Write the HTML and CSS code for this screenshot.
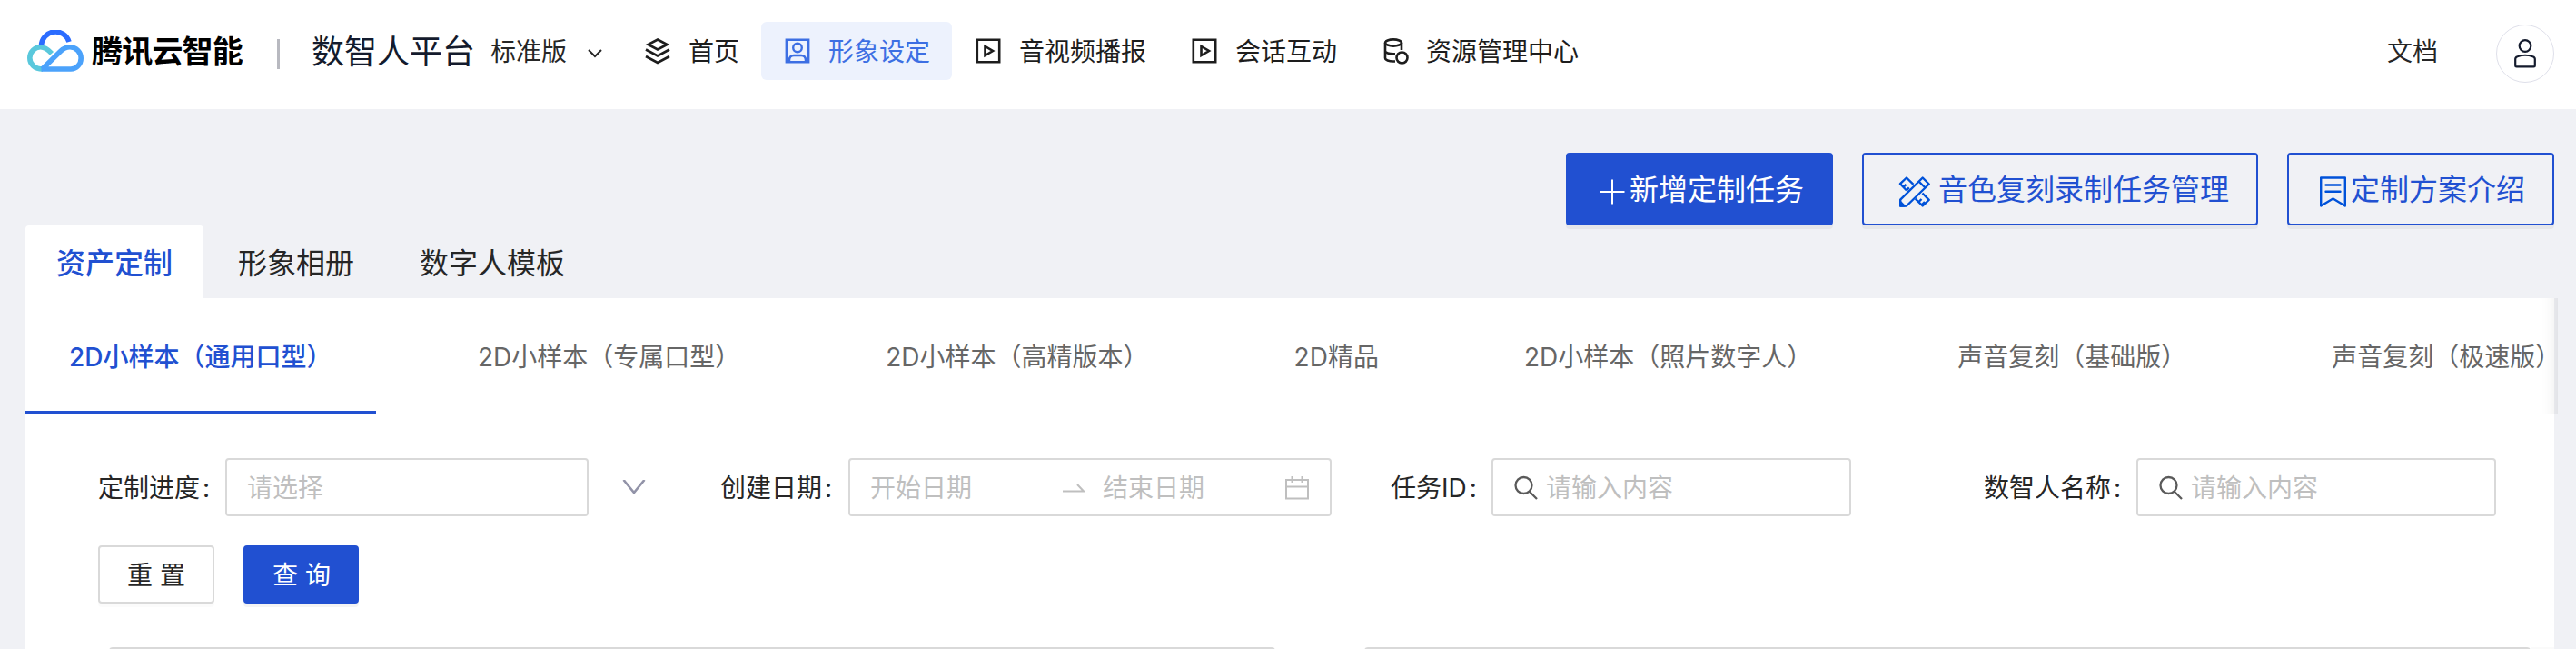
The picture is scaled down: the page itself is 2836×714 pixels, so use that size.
FILE: index.html
```html
<!DOCTYPE html>
<html lang="zh-CN">
<head>
    <meta charset="UTF-8">
    <meta name="viewport" content="width=device-width, initial-scale=1.0">
    <title>数智人平台 - 形象设定</title>
    <link rel="stylesheet" href="styles.css">
</head>
<body>
    <header>
        <a class="brand">
            <svg class="brand-cloud" viewBox="0 0 62 46" fill="none" stroke-width="5.6">
                <path d="M15.5 17A15.6 15.6 0 0 1 46 13" stroke="#2b6cff"/>
                <path d="M17 43C8 43 2.8 37.5 2.8 30.8C2.8 24 8.3 18.8 14.5 18.8C19.5 18.8 22.5 21 27 25.8" stroke="#5ac8dc"/>
                <path d="M15.5 43H48C54.5 43 59.2 37.5 59.2 31C59.2 24.5 54 18.8 47 18.8C42.5 18.8 39.5 20.5 36.5 23.5L16.5 43" stroke="#4ba2fb"/>
            </svg>
            <span class="brand-name">腾讯云智能</span>
        </a>
        <span class="divider"></span>
        <span class="platform">数智人平台</span>
        <span class="edition">标准版</span>
        <svg class="edition-arrow" viewBox="0 0 16 10" fill="none" stroke="#262626" stroke-width="2"><path d="M1 1l7 7 7-7"/></svg>

        <nav>
            <a class="nav-item">
                <svg viewBox="0 0 32 32" fill="none" stroke="currentColor" stroke-width="2.6">
                    <path d="M16 3.5L26.5 9 16 14.5 5.5 9zM3 14.5l13 7 13-7M3 22l13 7 13-7"/>
                </svg>
                <span>首页</span>
            </a>
            <a class="nav-item active">
                <svg viewBox="0 0 32 32" fill="none" stroke="currentColor" stroke-width="2.4">
                    <path d="M3.8 3.8h24.4v24.4H3.8zM7 28v-1.5c0-3.5 2-5.5 5-5.5h8c3 0 5 2 5 5.5V28"/>
                    <circle cx="16" cy="12.5" r="4.8"/>
                </svg>
                <span>形象设定</span>
            </a>
            <a class="nav-item">
                <svg viewBox="0 0 32 32" fill="none" stroke="currentColor" stroke-width="2.6">
                    <path d="M3.8 3.8h24.4v24.4H3.8zM12.5 11v10l8.5-5z"/>
                </svg>
                <span>音视频播报</span>
            </a>
            <a class="nav-item">
                <svg viewBox="0 0 32 32" fill="none" stroke="currentColor" stroke-width="2.6">
                    <path d="M3.8 3.8h24.4v24.4H3.8zM12.5 11v10l8.5-5z"/>
                </svg>
                <span>会话互动</span>
            </a>
            <a class="nav-item">
                <svg viewBox="0 0 32 32" fill="none" stroke="currentColor" stroke-width="2.6">
                    <ellipse cx="14" cy="7" rx="9" ry="3.6"/>
                    <path d="M5 7v17c0 2 4 3.5 9 3.5h2M23 7v8M5 16c0 2 4 3.5 11 3.2"/>
                    <circle cx="23.5" cy="23.5" r="6"/>
                </svg>
                <span>资源管理中心</span>
            </a>
        </nav>

        <a class="docs">文档</a>
        <span class="avatar">
            <svg viewBox="0 0 24 32" fill="none" stroke="#141b2d" stroke-width="2.2">
                <circle cx="12" cy="7.5" r="6.3"/>
                <path d="M1.2 22c0-1.5.8-2.2 2.3-2.7 5-1.8 12-1.8 17 0 1.5.5 2.3 1.2 2.3 2.7v7c0 .9-.5 1.4-1.4 1.4H2.6c-.9 0-1.4-.5-1.4-1.4z"/>
            </svg>
        </span>
    </header>

    <main>
        <div class="actions">
            <button class="btn btn-lg btn-primary">
                <svg class="icon-plus" viewBox="0 0 38 34" fill="none" stroke="currentColor" stroke-width="2"><path d="M5.5 17h27M19 3.5v27"/></svg><span>新增定制任务</span>
            </button>
            <button class="btn btn-lg btn-ghost">
                <svg class="icon-tools" viewBox="0 0 52 34" fill="none" stroke="#0052d9" stroke-width="2.4" stroke-linejoin="round">
                    <path d="M17 15.5L10 8.2l7-6.7 7.5 7.3M13.5 11.8l3-3M17 15.2l2.8-2.8M34.5 18.5l7.2 7.3-7 6.7-8-7.8M30.5 28l3-3M34 31l3-3"/>
                    <path d="M34.7 1.5l7 7L17 32.5h-6.8v-6.8zM30.5 5.5l7 7"/>
                    <path d="M10.2 28v4.5h4.5z" fill="#0052d9"/>
                </svg><span>音色复刻录制任务管理</span>
            </button>
            <button class="btn btn-lg btn-ghost">
                <svg class="icon-book" viewBox="0 0 38 34" fill="none" stroke="#0052d9" stroke-width="2.4" stroke-linejoin="round" stroke-linecap="round">
                    <path d="M5.2 1.5h26.6v31L18.5 24.5 5.2 32.5zM10.5 9.5h16M10.5 16.8h16"/>
                </svg><span>定制方案介绍</span>
            </button>
        </div>

        <div class="tabs">
            <a class="tab active">资产定制</a>
            <a class="tab">形象相册</a>
            <a class="tab">数字人模板</a>
        </div>

        <section class="panel">
            <div class="subtabs">
                <a class="subtab active">2D小样本（通用口型）</a>
                <a class="subtab">2D小样本（专属口型）</a>
                <a class="subtab">2D小样本（高精版本）</a>
                <a class="subtab">2D精品</a>
                <a class="subtab">2D小样本（照片数字人）</a>
                <a class="subtab">声音复刻（基础版）</a>
                <a class="subtab">声音复刻（极速版）</a>
            </div>

            <div class="filters">
                <div class="field">
                    <label>定制进度<i>:</i></label>
                    <div class="input select">请选择</div>
                    <svg class="select-arrow" viewBox="0 0 26 16" fill="none" stroke="#9293a8" stroke-width="2.6"><path d="M1.5 0L13 14 24.5 0"/></svg>
                </div>
                <div class="field field-date">
                    <label>创建日期<i>:</i></label>
                    <div class="input range">
                        <span class="range-start">开始日期</span>
                        <svg class="range-arrow" viewBox="0 0 24 10" fill="none" stroke="currentColor" stroke-width="2"><path d="M0 8.5h23L16 1"/></svg>
                        <span class="range-end">结束日期</span>
                        <svg class="range-calendar" viewBox="0 0 28 28" fill="none" stroke="currentColor" stroke-width="2"><path d="M2 5h24v20.5H2zM2 12.5h24M8.5 1v7M19.5 1v7"/></svg>
                    </div>
                </div>
                <div class="field field-id">
                    <label>任务ID<i>:</i></label>
                    <div class="input search">
                        <svg viewBox="0 0 28 28" fill="none" stroke="#5a5a5a" stroke-width="2.3"><circle cx="11.5" cy="11" r="9"/><path d="M17.5 17.5l8.5 8.5"/></svg>请输入内容
                    </div>
                </div>
                <div class="field field-name">
                    <label>数智人名称<i>:</i></label>
                    <div class="input search">
                        <svg viewBox="0 0 28 28" fill="none" stroke="#5a5a5a" stroke-width="2.3"><circle cx="11.5" cy="11" r="9"/><path d="M17.5 17.5l8.5 8.5"/></svg>请输入内容
                    </div>
                </div>
            </div>

            <div class="filter-buttons">
                <button class="btn btn-default">重置</button>
                <button class="btn btn-primary">查询</button>
            </div>

            <div class="cards">
                <div class="card"></div>
                <div class="card"></div>
                <div class="scroll-track"></div>
            </div>
        </section>
    </main>
</body>
</html>
```

FILE: styles.css
```css
* {
    box-sizing: border-box;
}
body {
    margin: 0;
    height: 714px;
    overflow: hidden;
    background: #f0f1f5;
    color: #262626;
    font-family: Inter, "Noto Sans CJK SC", sans-serif;
    font-size: 28px;
    line-height: 40px;
}
svg {
    display: block;
    flex: none;
}

/* header */
header {
    display: flex;
    align-items: center;
    height: 120px;
    padding: 0 24px 8px 30px;
    background: #fff;
    white-space: nowrap;
}
.brand {
    display: flex;
    align-items: center;
    width: 275px;
}
.brand-cloud {
    width: 62px;
    height: 46px;
    margin-right: 9px;
}
.brand-name {
    padding-top: 2px;
    color: #000;
    font-size: 34px;
    font-weight: 700;
    letter-spacing: -0.8px;
}
.divider {
    width: 3px;
    height: 33px;
    margin: 6px 35px 0 0;
    background: #b8b9c0;
}
.platform {
    width: 197px;
    padding-top: 2px;
    color: #141b2d;
    font-size: 36px;
}
.edition {
    width: 107px;
    padding-top: 1px;
}
.edition-arrow {
    width: 16px;
    height: 10px;
    margin: 6px 21px 0 0;
}
nav {
    display: flex;
}
.nav-item {
    display: flex;
    align-items: center;
    gap: 18px;
    height: 64px;
    padding: 0 24px;
    border-radius: 6px;
    color: #1d1d1d;
}
.nav-item svg {
    width: 32px;
    height: 32px;
}
.nav-item span {
    padding-top: 2px;
}
.nav-item.active {
    background: #edf2fd;
    color: #3d6fe3;
}
.docs {
    margin: 0 64px 0 auto;
    padding-top: 2px;
}
.avatar {
    display: flex;
    align-items: center;
    justify-content: center;
    width: 64px;
    height: 64px;
    margin-top: 6px;
    border: 1px solid #dfe0ea;
    border-radius: 50%;
}
.avatar svg {
    width: 24px;
    height: 32px;
}

/* buttons */
.btn {
    display: flex;
    align-items: center;
    height: 64px;
    padding: 2px 30px 0;
    border: 2px solid #2150d1;
    border-radius: 4px;
    font: inherit;
    white-space: nowrap;
}
.btn-lg {
    height: 80px;
    font-size: 32px;
}
.btn-primary {
    background: #2150d1;
    color: #fff;
    box-shadow: 0 4px 0 rgba(0, 0, 0, 0.045);
}
.btn-ghost {
    background: #f0f1f5;
    color: #2150d1;
    box-shadow: 0 4px 0 rgba(0, 0, 0, 0.045);
}
.btn-default {
    border-color: #d9d9d9;
    background: #fff;
    color: #262626;
    box-shadow: 0 4px 0 rgba(0, 0, 0, 0.016);
}
.icon-plus,
.icon-book {
    width: 38px;
    height: 34px;
    margin-top: 4px;
}
.icon-tools {
    width: 52px;
    height: 34px;
    margin-top: 4px;
}

main {
    padding: 48px 24px 0 28px;
}
.actions {
    display: flex;
    justify-content: flex-end;
    gap: 32px;
}

/* top tabs */
.tabs {
    display: flex;
    gap: 4px;
    height: 80px;
}
.tab {
    height: 80px;
    padding: 0 34px;
    border-radius: 4px 4px 0 0;
    font-size: 32px;
    line-height: 83px;
}
.tab.active {
    background: #fff;
    color: #2150d1;
    font-weight: 500;
}

.panel {
    height: 386px;
    background: #fff;
}
.subtabs {
    position: relative;
    display: flex;
    gap: 64px;
    height: 128px;
    white-space: nowrap;
}
/* shade over the scrolled edge of the tab bar */
.subtabs::after {
    content: "";
    position: absolute;
    top: 0;
    right: -4px;
    bottom: 0;
    width: 60px;
    box-shadow: inset -20px 0 16px -16px rgba(0, 0, 0, 0.08);
}
.subtab {
    flex: none;
    height: 128px;
    padding: 0 48px;
    color: #666;
    line-height: 130px;
}
.subtab.active {
    width: 386px;
    border-bottom: 4px solid #2150d1;
    color: #2150d1;
    font-weight: 500;
}

/* filters */
.filters {
    display: grid;
    grid-template-columns: 685px 738px 653px 564px;
    padding: 48px 0 0 80px;
    white-space: nowrap;
}
.field {
    display: flex;
    align-items: center;
}
.field label {
    flex: none;
    width: 140px;
    padding-top: 1px;
}
.field-date label {
    width: 141px;
}
.field-id label {
    width: 111px;
}
.field-name label {
    width: 168px;
}
.field i {
    margin-left: 3px;
    font-style: normal;
}
.input {
    display: flex;
    align-items: center;
    width: 396px;
    height: 64px;
    padding: 1px 22px 0;
    border: 2px solid #d9d9d9;
    border-radius: 4px;
    color: #bfbfbf;
}
.select {
    width: 400px;
}
.select-arrow {
    width: 26px;
    height: 16px;
    margin-left: 37px;
}
.range {
    width: 532px;
}
.range-start {
    width: 212px;
}
.range-arrow {
    width: 24px;
    height: 10px;
    margin-right: 20px;
}
.range-calendar {
    width: 28px;
    height: 28px;
    margin-left: auto;
}
.search svg {
    width: 28px;
    height: 28px;
    margin-right: 8px;
}
.filter-buttons {
    display: flex;
    gap: 32px;
    padding: 32px 80px 48px;
}
.filter-buttons .btn {
    width: 128px;
    letter-spacing: 8px;
}
.filter-buttons .btn-primary {
    width: 127px;
}

.cards {
    display: flex;
    height: 2px;
    padding-left: 92px;
    overflow: hidden;
}
.card {
    flex: none;
    width: 1284px;
    height: 300px;
    margin-right: 98px;
    border: 2px solid #d9d9d9;
    border-radius: 4px;
}
.card:nth-child(2) {
    margin-right: 0;
}
.scroll-track {
    flex: 1;
    background: #fafafa;
}
```
